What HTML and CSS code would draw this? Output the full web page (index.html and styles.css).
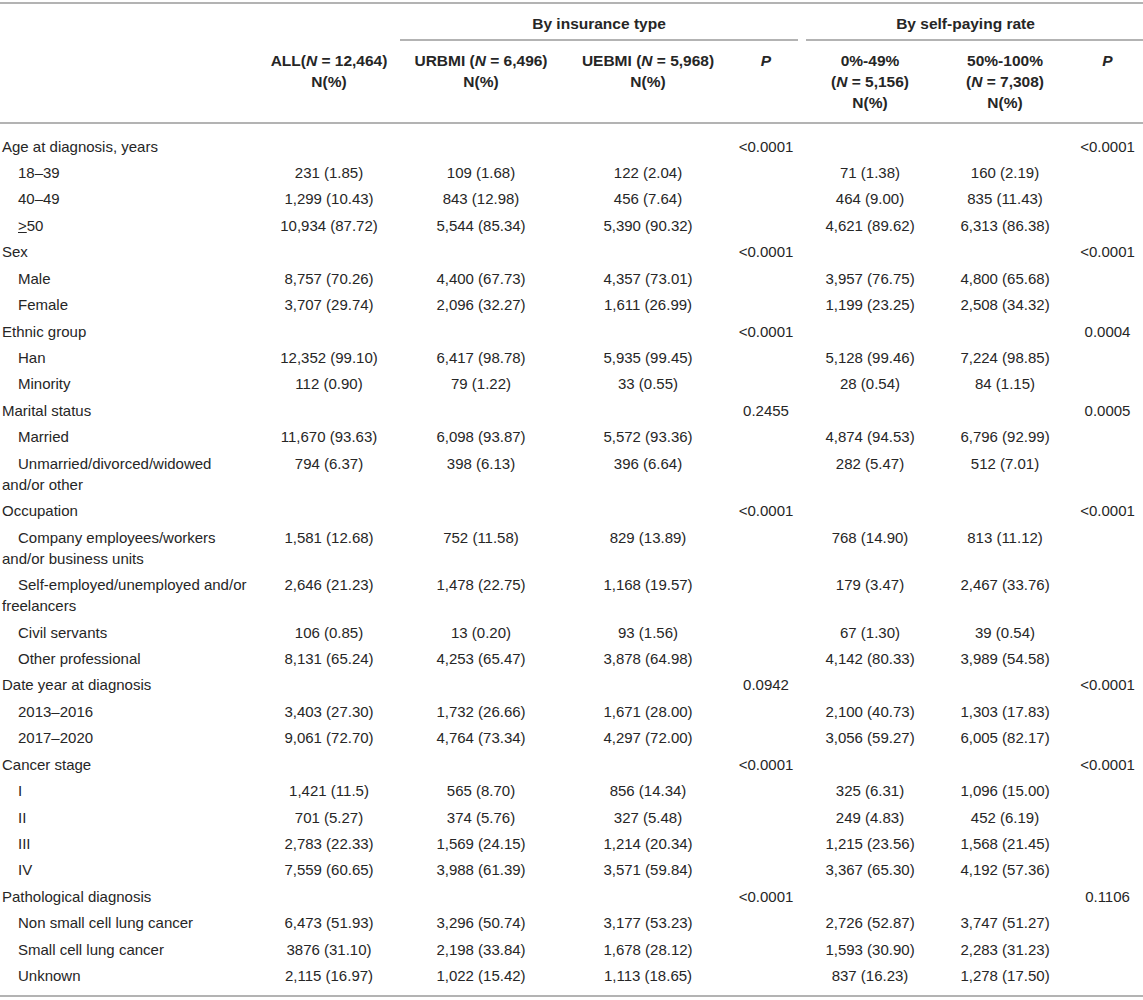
FILE: index.html
```html
<!DOCTYPE html>
<html>
<head>
<meta charset="utf-8">
<title>Patient characteristics by insurance type and self-paying rate</title>
<link rel="stylesheet" href="styles.css">
</head>
<body>
<table class="stats">
    <colgroup>
        <col class="c-label">
        <col class="c-all">
        <col class="c-urbmi">
        <col class="c-uebmi">
        <col class="c-p1">
        <col class="c-low">
        <col class="c-high">
        <col class="c-p2">
    </colgroup>
    <thead>
        <tr class="groups">
            <th></th>
            <th></th>
            <th colspan="3"><div class="group ins">By insurance type</div></th>
            <th colspan="3"><div class="group pay">By self-paying rate</div></th>
        </tr>
        <tr class="cols">
            <th></th>
            <th>ALL(<i>N</i> = 12,464)<br>N(%)</th>
            <th>URBMI (<i>N</i> = 6,496)<br>N(%)</th>
            <th>UEBMI (<i>N</i> = 5,968)<br>N(%)</th>
            <th><i>P</i></th>
            <th>0%-49%<br>(<i>N</i> = 5,156)<br>N(%)</th>
            <th>50%-100%<br>(<i>N</i> = 7,308)<br>N(%)</th>
            <th><i>P</i></th>
        </tr>
    </thead>
    <tbody>
        <tr class="first">
            <td>Age at diagnosis, years</td><td></td><td></td><td></td><td>&lt;0.0001</td><td></td><td></td><td>&lt;0.0001</td>
        </tr>
        <tr class="sub">
            <td>18–39</td><td>231 (1.85)</td><td>109 (1.68)</td><td>122 (2.04)</td><td></td><td>71 (1.38)</td><td>160 (2.19)</td><td></td>
        </tr>
        <tr class="sub">
            <td>40–49</td><td>1,299 (10.43)</td><td>843 (12.98)</td><td>456 (7.64)</td><td></td><td>464 (9.00)</td><td>835 (11.43)</td><td></td>
        </tr>
        <tr class="sub">
            <td><u>&gt;</u>50</td><td>10,934 (87.72)</td><td>5,544 (85.34)</td><td>5,390 (90.32)</td><td></td><td>4,621 (89.62)</td><td>6,313 (86.38)</td><td></td>
        </tr>
        <tr>
            <td>Sex</td><td></td><td></td><td></td><td>&lt;0.0001</td><td></td><td></td><td>&lt;0.0001</td>
        </tr>
        <tr class="sub">
            <td>Male</td><td>8,757 (70.26)</td><td>4,400 (67.73)</td><td>4,357 (73.01)</td><td></td><td>3,957 (76.75)</td><td>4,800 (65.68)</td><td></td>
        </tr>
        <tr class="sub">
            <td>Female</td><td>3,707 (29.74)</td><td>2,096 (32.27)</td><td>1,611 (26.99)</td><td></td><td>1,199 (23.25)</td><td>2,508 (34.32)</td><td></td>
        </tr>
        <tr>
            <td>Ethnic group</td><td></td><td></td><td></td><td>&lt;0.0001</td><td></td><td></td><td>0.0004</td>
        </tr>
        <tr class="sub">
            <td>Han</td><td>12,352 (99.10)</td><td>6,417 (98.78)</td><td>5,935 (99.45)</td><td></td><td>5,128 (99.46)</td><td>7,224 (98.85)</td><td></td>
        </tr>
        <tr class="sub">
            <td>Minority</td><td>112 (0.90)</td><td>79 (1.22)</td><td>33 (0.55)</td><td></td><td>28 (0.54)</td><td>84 (1.15)</td><td></td>
        </tr>
        <tr>
            <td>Marital status</td><td></td><td></td><td></td><td>0.2455</td><td></td><td></td><td>0.0005</td>
        </tr>
        <tr class="sub">
            <td>Married</td><td>11,670 (93.63)</td><td>6,098 (93.87)</td><td>5,572 (93.36)</td><td></td><td>4,874 (94.53)</td><td>6,796 (92.99)</td><td></td>
        </tr>
        <tr class="sub">
            <td>Unmarried/divorced/widowed and/or other</td><td>794 (6.37)</td><td>398 (6.13)</td><td>396 (6.64)</td><td></td><td>282 (5.47)</td><td>512 (7.01)</td><td></td>
        </tr>
        <tr>
            <td>Occupation</td><td></td><td></td><td></td><td>&lt;0.0001</td><td></td><td></td><td>&lt;0.0001</td>
        </tr>
        <tr class="sub">
            <td>Company employees/workers and/or business units</td><td>1,581 (12.68)</td><td>752 (11.58)</td><td>829 (13.89)</td><td></td><td>768 (14.90)</td><td>813 (11.12)</td><td></td>
        </tr>
        <tr class="sub">
            <td>Self-employed/unemployed and/or freelancers</td><td>2,646 (21.23)</td><td>1,478 (22.75)</td><td>1,168 (19.57)</td><td></td><td>179 (3.47)</td><td>2,467 (33.76)</td><td></td>
        </tr>
        <tr class="sub">
            <td>Civil servants</td><td>106 (0.85)</td><td>13 (0.20)</td><td>93 (1.56)</td><td></td><td>67 (1.30)</td><td>39 (0.54)</td><td></td>
        </tr>
        <tr class="sub">
            <td>Other professional</td><td>8,131 (65.24)</td><td>4,253 (65.47)</td><td>3,878 (64.98)</td><td></td><td>4,142 (80.33)</td><td>3,989 (54.58)</td><td></td>
        </tr>
        <tr>
            <td>Date year at diagnosis</td><td></td><td></td><td></td><td>0.0942</td><td></td><td></td><td>&lt;0.0001</td>
        </tr>
        <tr class="sub">
            <td>2013–2016</td><td>3,403 (27.30)</td><td>1,732 (26.66)</td><td>1,671 (28.00)</td><td></td><td>2,100 (40.73)</td><td>1,303 (17.83)</td><td></td>
        </tr>
        <tr class="sub">
            <td>2017–2020</td><td>9,061 (72.70)</td><td>4,764 (73.34)</td><td>4,297 (72.00)</td><td></td><td>3,056 (59.27)</td><td>6,005 (82.17)</td><td></td>
        </tr>
        <tr>
            <td>Cancer stage</td><td></td><td></td><td></td><td>&lt;0.0001</td><td></td><td></td><td>&lt;0.0001</td>
        </tr>
        <tr class="sub">
            <td>I</td><td>1,421 (11.5)</td><td>565 (8.70)</td><td>856 (14.34)</td><td></td><td>325 (6.31)</td><td>1,096 (15.00)</td><td></td>
        </tr>
        <tr class="sub">
            <td>II</td><td>701 (5.27)</td><td>374 (5.76)</td><td>327 (5.48)</td><td></td><td>249 (4.83)</td><td>452 (6.19)</td><td></td>
        </tr>
        <tr class="sub">
            <td>III</td><td>2,783 (22.33)</td><td>1,569 (24.15)</td><td>1,214 (20.34)</td><td></td><td>1,215 (23.56)</td><td>1,568 (21.45)</td><td></td>
        </tr>
        <tr class="sub">
            <td>IV</td><td>7,559 (60.65)</td><td>3,988 (61.39)</td><td>3,571 (59.84)</td><td></td><td>3,367 (65.30)</td><td>4,192 (57.36)</td><td></td>
        </tr>
        <tr>
            <td>Pathological diagnosis</td><td></td><td></td><td></td><td>&lt;0.0001</td><td></td><td></td><td>0.1106</td>
        </tr>
        <tr class="sub">
            <td>Non small cell lung cancer</td><td>6,473 (51.93)</td><td>3,296 (50.74)</td><td>3,177 (53.23)</td><td></td><td>2,726 (52.87)</td><td>3,747 (51.27)</td><td></td>
        </tr>
        <tr class="sub">
            <td>Small cell lung cancer</td><td>3876 (31.10)</td><td>2,198 (33.84)</td><td>1,678 (28.12)</td><td></td><td>1,593 (30.90)</td><td>2,283 (31.23)</td><td></td>
        </tr>
        <tr class="sub last">
            <td>Unknown</td><td>2,115 (16.97)</td><td>1,022 (15.42)</td><td>1,113 (18.65)</td><td></td><td>837 (16.23)</td><td>1,278 (17.50)</td><td></td>
        </tr>
    </tbody>
</table>
</body>
</html>
```

FILE: styles.css
```css
body {
    margin: 0;
    padding-top: 2px;
    background: #fff;
    color: #262626;
    font-family: 'Liberation Sans', Arial, sans-serif;
    font-size: 15px;
    line-height: 21px;
}
.stats {
    width: 1143px;
    table-layout: fixed;
    border-collapse: separate;
    border-spacing: 0;
}
.c-label { width: 262px; }
.c-all   { width: 134px; }
.c-urbmi { width: 170px; }
.c-uebmi { width: 164px; }
.c-p1    { width: 72px; }
.c-low   { width: 136px; }
.c-high  { width: 134px; }
.c-p2    { width: 71px; }

th, td {
    padding: 2.72px 4px;
    text-align: center;
    vertical-align: top;
    font-weight: normal;
}
th {
    font-size: 15.5px;
    font-weight: bold;
    white-space: nowrap;
}

/* header */
.groups th {
    border-top: 2px solid #b3b3b3;
    padding: 0;
}
.group {
    padding: 8.5px 0 5.5px;
    border-bottom: 2px solid #b3b3b3;
}
.group.ins {
    margin: 0 4px;
}
.group.pay {
    margin-left: 4px;
    padding-right: 18px;
}
.cols th {
    padding-top: 8.5px;
    padding-bottom: 9.5px;
    border-bottom: 2px solid #b3b3b3;
}

/* body */
tbody td:first-child {
    text-align: left;
    padding-left: 2px;
    padding-right: 6px;
}
tbody .sub td:first-child {
    text-indent: 16px;
}
tbody .first td {
    padding-top: 11.5px;
}
tbody .last td {
    padding-bottom: 8.7px;
    border-bottom: 2px solid #b3b3b3;
}
```
